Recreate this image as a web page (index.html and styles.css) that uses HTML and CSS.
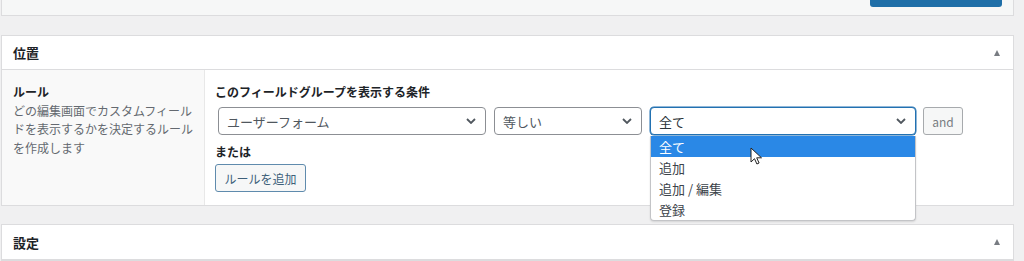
FILE: index.html
```html
<!DOCTYPE html>
<html lang="ja">
<head>
<meta charset="utf-8">
<title>位置</title>
<link rel="stylesheet" href="styles.css">
</head>
<body>
<div class="wrap">
  <div class="top-panel"><div class="publish"></div></div>

  <div class="postbox">
    <div class="hdr">
      <h2>位置</h2>
      <span class="toggle"></span>
    </div>
    <div class="body">
      <div class="label-col">
        <div class="lbl">ルール</div>
        <p class="desc">どの編集画面でカスタムフィールドを表示するかを決定するルールを作成します</p>
      </div>
      <div class="input-col">
        <h4>このフィールドグループを表示する条件</h4>
        <div class="rule-row">
          <div class="sel w1"><span>ユーザーフォーム</span><svg class="chev" viewBox="0 0 10 6" width="10" height="6"><path d="M1 1l4 4 4-4" fill="none" stroke="#50575e" stroke-width="1.8"/></svg></div>
          <div class="sel w2"><span>等しい</span><svg class="chev" viewBox="0 0 10 6" width="10" height="6"><path d="M1 1l4 4 4-4" fill="none" stroke="#50575e" stroke-width="1.8"/></svg></div>
          <div class="sel w3 focus"><span>全て</span><svg class="chev" viewBox="0 0 10 6" width="10" height="6"><path d="M1 1l4 4 4-4" fill="none" stroke="#50575e" stroke-width="1.8"/></svg>
            <ul class="dropdown">
              <li class="active">全て</li>
              <li>追加</li>
              <li>追加 / 編集</li>
              <li>登録</li>
            </ul>
            <svg class="cursor" viewBox="0 0 12 18" width="12" height="18"><path d="M1 1v14l3.5-3.3 2.4 5.3 2.2-1-2.4-5.2h4.8z" fill="#fff" stroke="#222" stroke-width="1"/></svg>
          </div>
          <button class="btn-and">and</button>
        </div>
        <h4 class="or">または</h4>
        <button class="btn-add">ルールを追加</button>
      </div>
    </div>
  </div>

  <div class="postbox last">
    <div class="hdr">
      <h2>設定</h2>
      <span class="toggle"></span>
    </div>
  </div>
</div>
</body>
</html>
```

FILE: styles.css
```css
* { box-sizing: border-box; }
html, body { margin: 0; padding: 0; }
body {
  background: #f0f0f1;
  font-family: "Noto Sans CJK JP", "Noto Sans", sans-serif;
  font-size: 12px;
  color: #1d2327;
  overflow: hidden;
  height: 261px;
}
.wrap { padding: 0 10px 0 1px; }

.top-panel {
  height: 16px;
  background: #f6f7f7;
  border: 1px solid #dcdcde;
  border-top: none;
  margin-bottom: 19px;
  display: flex;
  justify-content: flex-end;
  padding-right: 11px;
}
.publish {
  width: 132px;
  height: 7px;
  background: #1f6fa8;
  border-radius: 0 0 3px 3px;
}

.postbox {
  background: #fff;
  border: 1px solid #dcdcde;
  margin-bottom: 18px;
}
.postbox.last { margin-bottom: 0; }
.hdr {
  height: 34px;
  border-bottom: 1px solid #dcdcde;
  display: flex;
  align-items: center;
  justify-content: space-between;
  padding: 0 13px 0 11px;
}
.postbox.last .hdr { height: 35px; }
.hdr h2 {
  margin: 0;
  font-size: 13px;
  font-weight: 700;
  line-height: 1;
}
.toggle {
  width: 0;
  height: 0;
  border-left: 3.5px solid transparent;
  border-right: 3.5px solid transparent;
  border-bottom: 6px solid #787c82;
}

.body {
  display: flex;
  height: 135px;
}
.label-col {
  width: 203px;
  flex: none;
  background: #f9f9f9;
  border-right: 1px solid #e8e8e8;
  padding: 13px 10px 0 11px;
}
.lbl {
  font-weight: 700;
  line-height: 18.5px;
}
.desc {
  margin: 0;
  color: #646970;
  line-height: 18.5px;
}
.input-col {
  flex: 1;
  padding: 13px 10px 0 10px;
}
.input-col h4 {
  margin: 0;
  font-size: 12px;
  font-weight: 700;
  line-height: 18px;
}
.rule-row {
  display: flex;
  gap: 8px;
  margin: 6px 0 0 3px;
}
.sel {
  position: relative;
  height: 28px;
  border: 1px solid #8c8f94;
  border-radius: 4px;
  background: #fff;
  display: flex;
  align-items: center;
  justify-content: space-between;
  padding: 0 9px 0 8px;
  font-size: 13px;
  color: #50575e;
}
.w1 { width: 268px; }
.w2 { width: 148px; }
.w3 { width: 266px; }
.sel.focus {
  border-color: #2271b1;
  box-shadow: 0 0 0 0.5px #2271b1;
  color: #2c3338;
}
.chev { flex: none; }

.dropdown {
  position: absolute;
  top: 28px;
  left: -1px;
  width: 266px;
  margin: 0;
  padding: 0;
  list-style: none;
  background: #fff;
  border: 1px solid #c3c4c7;
  border-top: none;
  border-radius: 0 0 4px 4px;
  box-shadow: 0 1px 2px rgba(0,0,0,0.12);
  z-index: 5;
}
.dropdown li {
  height: 21px;
  line-height: 21px;
  padding-left: 8px;
  font-size: 13px;
  color: #3c434a;
}
.dropdown li.active {
  background: #2a88e6;
  color: #fff;
}
.cursor {
  position: absolute;
  left: 99px;
  top: 39px;
  z-index: 6;
}

.btn-and {
  width: 40px;
  height: 28px;
  border: 1px solid #a7aaad;
  border-radius: 3px;
  background: #f6f7f7;
  color: #787c82;
  font-family: inherit;
  font-size: 12px;
  margin-left: -1px;
  padding: 0;
}
.input-col h4.or {
  margin-top: 8px;
}
.btn-add {
  margin-top: 3px;
  width: 91px;
  height: 28px;
  border: 1px solid #5f8bad;
  border-radius: 3px;
  background: #f6f7f7;
  color: #3d5f7a;
  font-family: inherit;
  font-size: 12px;
  padding: 0;
}
```
